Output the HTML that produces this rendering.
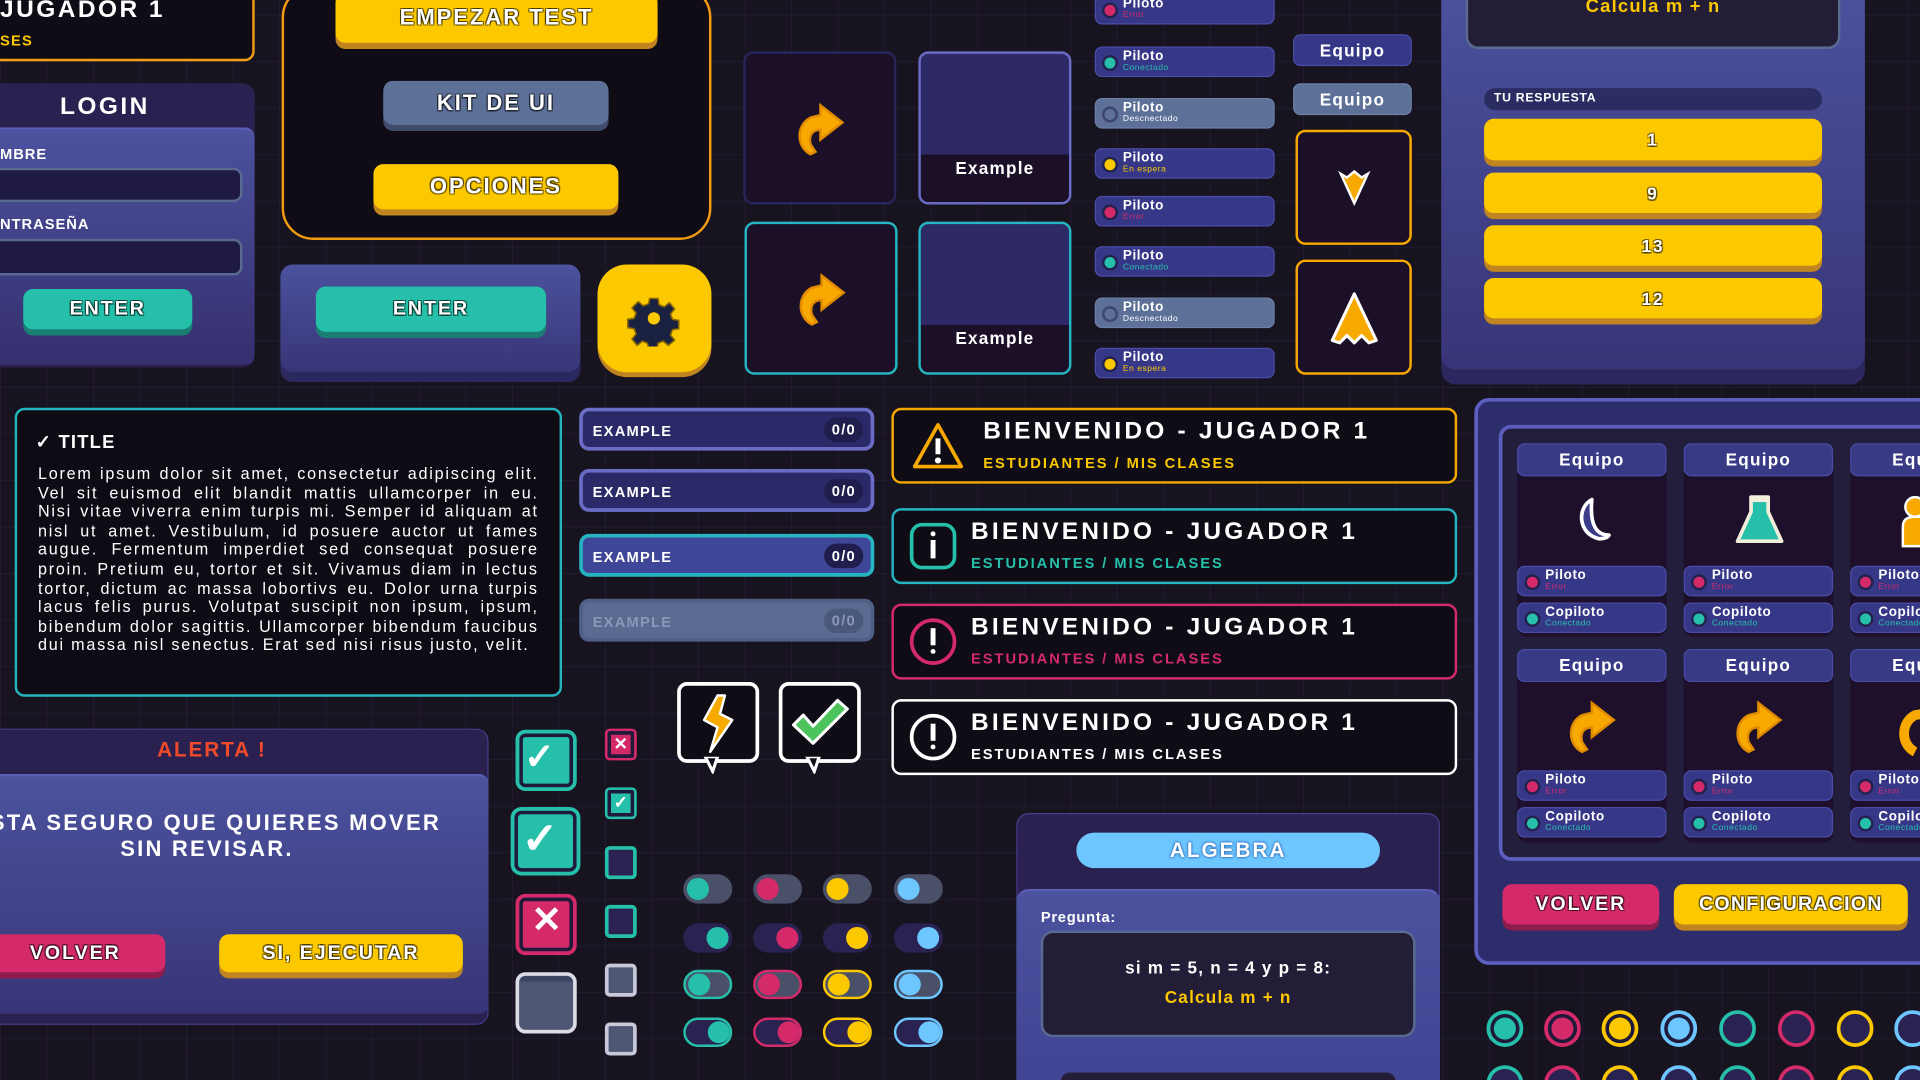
<!DOCTYPE html>
<html><head><meta charset="utf-8"><style>
*{box-sizing:border-box;margin:0;padding:0}
html,body{width:1920px;height:1080px;overflow:hidden;background:#17131f}
#w{position:absolute;left:0;top:0;width:1568px;height:882px;overflow:hidden;transform:scale(1.22449);transform-origin:0 0;font-family:"Liberation Sans",sans-serif;color:#fff;
background-color:#17131f;background-image:linear-gradient(rgba(80,60,140,.18) 1px,transparent 1px),linear-gradient(90deg,rgba(80,60,140,.18) 1px,transparent 1px);background-size:38px 38px;background-position:0 12px}
.a{position:absolute}
.btn{position:absolute;display:flex;align-items:center;justify-content:center;font-weight:bold;border-radius:8px;color:#fff;letter-spacing:1.6px;text-shadow:-1px -1px 0 rgba(0,0,0,.45),1px -1px 0 rgba(0,0,0,.45),-1px 1px 0 rgba(0,0,0,.45),1px 1px 0 rgba(0,0,0,.45)}
.y{background:#fcc800;box-shadow:0 5px 0 #c08420}
.t{background:#26c0aa;box-shadow:0 5px 0 #1a7f72}
.p{background:#d42a6a;box-shadow:0 5px 0 #8d1d4a}
.s{background:#5d7098;box-shadow:0 5px 0 #3f4c6c}
.chip{position:absolute;width:147px;height:25px;border-radius:6px;background:#363887;border:1px solid #4a4ca8}
.chip i{position:absolute;left:5px;top:6px;width:13px;height:13px;border-radius:50%;border:2px solid #23224f}
.chip b{position:absolute;left:22px;top:1px;font-size:11px;line-height:12px;letter-spacing:.5px}
.chip em{position:absolute;left:22px;top:13px;font-size:7px;font-style:normal;letter-spacing:.4px}
.card{position:absolute;width:125px;height:125px;border-radius:8px;background:#1c1029}
.wb{position:absolute;left:728px;width:462px;height:62px;border-radius:8px;background:#0f0c15;border:2px solid}
.wb .h{position:absolute;left:64px;top:6px;font-size:20px;font-weight:bold;letter-spacing:2.6px}
.wb .s2{position:absolute;left:64px;top:36px;font-size:12px;font-weight:bold;letter-spacing:1.6px}
.ex{position:absolute;left:473px;width:241px;height:35px;border-radius:8px;border:3px solid #6a6cc5;background:#2b2a68;font-size:12px;font-weight:bold;padding:9px 0 0 8px;letter-spacing:1px}
.ex span{position:absolute;right:6px;top:5px;background:#1f1e4c;border-radius:10px;padding:3px 6px;font-size:12px}
.tg{position:absolute;width:40px;height:24px;border-radius:12px;background:#4a5068}
.tg i{position:absolute;top:3px;width:18px;height:18px;border-radius:50%}
.cir{position:absolute;width:30px;height:30px;border-radius:50%;border:3px solid}
.tc{position:absolute;width:122px;border-radius:8px;background:#1e0f2a}
.tc .hd{height:27px;background:#383a86;border-radius:6px;border:1px solid #4a4ca8;text-align:center;font-size:14px;line-height:25px;font-weight:bold;letter-spacing:1px}
</style></head><body><div id="w">

<!-- top-left banner -->
<div class="a" style="left:-12px;top:-10px;width:220px;height:60px;border:2px solid #f39c12;border-radius:8px;background:#0f0c15"></div>
<div class="a" style="left:0;top:-3px;font-size:20px;font-weight:bold;letter-spacing:2px">JUGADOR 1</div>
<div class="a" style="left:0;top:26px;font-size:12px;font-weight:bold;color:#fcc800;letter-spacing:1px">SES</div>

<!-- login -->
<div class="a" style="left:-12px;top:68px;width:220px;height:232px;border-radius:10px;background:#2a2150"></div>
<div class="a" style="left:49px;top:76px;font-size:20px;font-weight:bold;letter-spacing:2px">LOGIN</div>
<div class="a" style="left:-12px;top:104px;width:220px;height:194px;border-radius:8px;background:linear-gradient(#4c529e,#352f6e);border-top:2px solid #5a60b8"></div>
<div class="a" style="left:0;top:119px;font-size:12px;font-weight:bold;letter-spacing:.8px">MBRE</div>
<div class="a" style="left:-12px;top:137px;width:210px;height:28px;border-radius:7px;background:#1f1a44;border:2px solid #5a6a90"></div>
<div class="a" style="left:0;top:176px;font-size:12px;font-weight:bold;letter-spacing:.8px">NTRASEÑA</div>
<div class="a" style="left:-12px;top:195px;width:210px;height:30px;border-radius:7px;background:#1f1a44;border:2px solid #5a6a90"></div>
<div class="btn t" style="left:19px;top:236px;width:138px;height:33px;font-size:16px">ENTER</div>

<!-- menu box -->
<div class="a" style="left:230px;top:-12px;width:351px;height:208px;border:2px solid #f39c12;border-radius:26px;background:#0f0c15"></div>
<div class="btn y" style="left:274px;top:-6px;width:263px;height:41px;font-size:18px">EMPEZAR TEST</div>
<div class="btn s" style="left:313px;top:66px;width:184px;height:36px;font-size:18px">KIT DE UI</div>
<div class="btn y" style="left:305px;top:134px;width:200px;height:37px;font-size:18px">OPCIONES</div>

<!-- enter panel -->
<div class="a" style="left:229px;top:216px;width:245px;height:88px;border-radius:10px;background:linear-gradient(#4c529e,#383577);box-shadow:0 8px 0 #2b2860"></div>
<div class="btn t" style="left:258px;top:234px;width:188px;height:37px;font-size:16px">ENTER</div>
<div class="a" style="left:488px;top:216px;width:93px;height:88px;border-radius:24px;background:#fcc800;box-shadow:0 4px 0 #c08420"></div>
<svg class="a" style="left:511px;top:237px" width="46" height="46" viewBox="0 0 46 46"><g fill="#1b2140" stroke="#8a6a00" stroke-width="1.5"><path d="M19 5h8l1 6 5 2 5-4 5 6-4 5 2 5 6 1v8l-6 1-2 5 4 5-6 5-5-4-5 2-1 6h-8l-1-6-5-2-5 4-5-6 4-5-2-5-6-1v-8l6-1 2-5-4-5 6-6 5 4 5-2z" transform="scale(.85) translate(4 3)"/></g><circle cx="23" cy="23" r="5" fill="#fcc800"/></svg>

<!-- arrow cards -->
<div class="card" style="left:607px;top:42px;border:2px solid #2a2558"></div>
<div class="card" style="left:608px;top:181px;border:2px solid #26b5c0"></div>
<svg class="a" style="left:648px;top:82px" width="44" height="48" viewBox="0 0 44 48"><path d="M14 44C2 38 2 20 14 14l8-2V4l18 14-18 14v-8c-6 0-10 4-8 12l4 6z" fill="#f7a900" stroke="#e08a00" stroke-width="2"/></svg>
<svg class="a" style="left:649px;top:221px" width="44" height="48" viewBox="0 0 44 48"><path d="M14 44C2 38 2 20 14 14l8-2V4l18 14-18 14v-8c-6 0-10 4-8 12l4 6z" fill="#f7a900" stroke="#e08a00" stroke-width="2"/></svg>
<div class="card" style="left:750px;top:42px;border:2px solid #6a6cc5;background:linear-gradient(#2e2a68 0 68%,#1c1029 68%)"></div>
<div class="a" style="left:750px;top:129px;width:125px;text-align:center;font-size:14px;font-weight:bold;letter-spacing:1px">Example</div>
<div class="card" style="left:750px;top:181px;border:2px solid #26b5c0;background:linear-gradient(#2e2a68 0 68%,#1c1029 68%)"></div>
<div class="a" style="left:750px;top:268px;width:125px;text-align:center;font-size:14px;font-weight:bold;letter-spacing:1px">Example</div>

<!-- chips -->
<div class="chip" style="left:894px;top:-5px"><i style="background:#d42a6a"></i><b>Piloto</b><em style="color:#d42a6a">Error</em></div>
<div class="chip" style="left:894px;top:38px"><i style="background:#26c0aa"></i><b>Piloto</b><em style="color:#26c0aa">Conectado</em></div>
<div class="chip" style="left:894px;top:80px;background:#5d7098;border-color:#6d80a8"><i style="background:#5d7098;border-color:#3c4668"></i><b>Piloto</b><em>Descnectado</em></div>
<div class="chip" style="left:894px;top:121px"><i style="background:#fcc800"></i><b>Piloto</b><em style="color:#fcc800">En espera</em></div>
<div class="chip" style="left:894px;top:160px"><i style="background:#d42a6a"></i><b>Piloto</b><em style="color:#d42a6a">Error</em></div>
<div class="chip" style="left:894px;top:201px"><i style="background:#26c0aa"></i><b>Piloto</b><em style="color:#26c0aa">Conectado</em></div>
<div class="chip" style="left:894px;top:243px;background:#5d7098;border-color:#6d80a8"><i style="background:#5d7098;border-color:#3c4668"></i><b>Piloto</b><em>Descnectado</em></div>
<div class="chip" style="left:894px;top:284px"><i style="background:#fcc800"></i><b>Piloto</b><em style="color:#fcc800">En espera</em></div>

<div class="a" style="left:1056px;top:28px;width:97px;height:26px;border-radius:6px;background:#363887;border:1px solid #4a4ca8;text-align:center;font-size:14px;line-height:24px;font-weight:bold;letter-spacing:1px">Equipo</div>
<div class="a" style="left:1056px;top:68px;width:97px;height:26px;border-radius:6px;background:#5d7098;border:1px solid #6d80a8;text-align:center;font-size:14px;line-height:24px;font-weight:bold;letter-spacing:1px">Equipo</div>
<div class="a" style="left:1058px;top:106px;width:95px;height:94px;border:2px solid #f7a900;border-radius:8px;background:#1c1029"></div>
<svg class="a" style="left:1092px;top:138px" width="28" height="30" viewBox="0 0 28 30"><path d="M3 4l5 3 6-5 6 5 5-3-11 24z" fill="#f7a900" stroke="#fff" stroke-width="2"/></svg>
<div class="a" style="left:1058px;top:212px;width:95px;height:94px;border:2px solid #f7a900;border-radius:8px;background:#1c1029"></div>
<svg class="a" style="left:1084px;top:236px" width="44" height="50" viewBox="0 0 44 50"><path d="M22 4L40 42l-6 2-6-6-6 6-6-6-6 6-6-2z" fill="#f7a900" stroke="#fff" stroke-width="2.5" stroke-linejoin="round"/></svg>

<!-- quiz panel -->
<div class="a" style="left:1177px;top:-12px;width:346px;height:314px;border-radius:12px;background:linear-gradient(#4c529e,#383577);box-shadow:0 12px 0 #2b2860"></div>
<div class="a" style="left:1197px;top:-12px;width:306px;height:52px;border-radius:10px;background:#231d37;border:2px solid #5a6a90"></div>
<div class="a" style="left:1197px;top:-3px;width:306px;text-align:center;font-size:15px;font-weight:bold;color:#fcc800;letter-spacing:1px">Calcula m + n</div>
<div class="a" style="left:1212px;top:72px;width:276px;height:18px;border-radius:9px;background:#2b2d62;font-size:10px;font-weight:bold;padding:3px 0 0 8px;letter-spacing:.6px">TU RESPUESTA</div>
<div class="btn y" style="left:1212px;top:97px;width:276px;height:34px;font-size:14px">1</div>
<div class="btn y" style="left:1212px;top:141px;width:276px;height:33px;font-size:14px">9</div>
<div class="btn y" style="left:1212px;top:184px;width:276px;height:33px;font-size:14px">13</div>
<div class="btn y" style="left:1212px;top:227px;width:276px;height:33px;font-size:14px">12</div>

<!-- title box -->
<div class="a" style="left:12px;top:333px;width:447px;height:236px;border:2px solid #26b5c0;border-radius:8px;background:#0e0b14"></div>
<div class="a" style="left:29px;top:352px;font-size:15px;font-weight:bold;letter-spacing:1px">✓ TITLE</div>
<div class="a" style="left:31px;top:379px;width:409px;font-size:13.2px;line-height:15.6px;text-align:justify;letter-spacing:1.45px">Lorem ipsum dolor sit amet, consectetur adipiscing elit. Vel sit euismod elit blandit mattis ullamcorper in eu. Nisi vitae viverra enim turpis mi. Semper id aliquam at nisl ut amet. Vestibulum, id posuere auctor ut fames augue. Fermentum imperdiet sed consequat posuere proin. Pretium eu, tortor et sit. Vivamus diam in lectus tortor, dictum ac massa lobortivs eu. Dolor urna turpis lacus felis purus. Volutpat suscipit non ipsum, ipsum, bibendum dolor sagittis. Ullamcorper bibendum faucibus dui massa nisl senectus. Erat sed nisi risus justo, velit.</div>

<!-- example bars -->
<div class="ex" style="top:333px">EXAMPLE<span>0/0</span></div>
<div class="ex" style="top:383px">EXAMPLE<span>0/0</span></div>
<div class="ex" style="top:436px;border-color:#26b5c0;background:#3d4697">EXAMPLE<span>0/0</span></div>
<div class="ex" style="top:489px;border-color:#4f5f86;background:#5a6a90;color:#8a98b8">EXAMPLE<span style="background:#4a587c;color:#8a98b8">0/0</span></div>

<!-- welcome boxes -->
<div class="wb" style="top:333px;border-color:#f7a900"><svg class="a" style="left:14px;top:8px" width="44" height="42" viewBox="0 0 44 42"><path d="M22 4L41 38H3z" fill="none" stroke="#f7a900" stroke-width="3" stroke-linejoin="round"/><rect x="20" y="15" width="4" height="13" fill="#fff"/><circle cx="22" cy="33" r="2.5" fill="#fff"/></svg><div class="h" style="left:73px">BIENVENIDO - JUGADOR 1</div><div class="s2" style="left:73px;color:#fcc800">ESTUDIANTES / MIS CLASES</div></div>
<div class="wb" style="top:415px;border-color:#26b5c0"><div class="a" style="left:13px;top:10px;width:38px;height:38px;border:3px solid #26c0aa;border-radius:10px"></div><div class="a" style="left:30px;top:17px;width:4px;height:4px;background:#fff;border-radius:2px"></div><div class="a" style="left:30px;top:24px;width:4px;height:15px;background:#fff"></div><div class="h" style="left:63px">BIENVENIDO - JUGADOR 1</div><div class="s2" style="left:63px;color:#26c0aa">ESTUDIANTES / MIS CLASES</div></div>
<div class="wb" style="top:493px;border-color:#d42a6a"><div class="a" style="left:13px;top:10px;width:38px;height:38px;border:3px solid #d42a6a;border-radius:50%"></div><div class="a" style="left:30px;top:18px;width:4px;height:14px;background:#fff"></div><div class="a" style="left:30px;top:35px;width:4px;height:4px;background:#fff;border-radius:2px"></div><div class="h" style="left:63px">BIENVENIDO - JUGADOR 1</div><div class="s2" style="left:63px;color:#d42a6a">ESTUDIANTES / MIS CLASES</div></div>
<div class="wb" style="top:571px;border-color:#fff"><div class="a" style="left:13px;top:10px;width:38px;height:38px;border:3px solid #fff;border-radius:50%"></div><div class="a" style="left:30px;top:18px;width:4px;height:14px;background:#fff"></div><div class="a" style="left:30px;top:35px;width:4px;height:4px;background:#fff;border-radius:2px"></div><div class="h" style="left:63px">BIENVENIDO - JUGADOR 1</div><div class="s2" style="left:63px">ESTUDIANTES / MIS CLASES</div></div>

<!-- alert -->
<div class="a" style="left:-12px;top:595px;width:411px;height:242px;border-radius:10px;background:#2a2150;border:1px solid #4a3a8a"></div>
<div class="a" style="left:-12px;top:603px;width:370px;text-align:center;font-size:17px;font-weight:bold;color:#f04a2a;letter-spacing:1.5px">ALERTA !</div>
<div class="a" style="left:-12px;top:632px;width:411px;height:196px;border-radius:8px;background:linear-gradient(#4c529e,#383577);border-top:2px solid #5a60b8"></div>
<div class="a" style="left:-96px;top:662px;width:530px;text-align:center;font-size:18px;font-weight:bold;line-height:21px;letter-spacing:1.8px">ESTA SEGURO QUE QUIERES MOVER<br>SIN REVISAR.</div>
<div class="btn p" style="left:-12px;top:763px;width:147px;height:31px;font-size:16px">VOLVER</div>
<div class="btn y" style="left:179px;top:763px;width:199px;height:31px;font-size:16px">SI, EJECUTAR</div>

<!-- checkboxes -->
<div class="a" style="left:421px;top:596px;width:50px;height:50px;border-radius:8px;background:#26c0aa;border:3px solid #26c0aa;box-shadow:inset 0 0 0 3px #1f1a3a"></div>
<div class="a" style="left:428px;top:601px;font-size:30px;font-weight:bold">✓</div>
<div class="a" style="left:417px;top:659px;width:57px;height:56px;border-radius:9px;background:#26c0aa;border:3px solid #26c0aa;box-shadow:inset 0 0 0 3px #1f1a3a"></div>
<div class="a" style="left:426px;top:664px;font-size:36px;font-weight:bold">✓</div>
<div class="a" style="left:421px;top:730px;width:50px;height:50px;border-radius:8px;background:#d42a6a;border:3px solid #d42a6a;box-shadow:inset 0 0 0 3px #1f1a3a"></div>
<div class="a" style="left:434px;top:734px;font-size:30px;font-weight:bold">✕</div>
<div class="a" style="left:421px;top:794px;width:50px;height:50px;border-radius:8px;background:linear-gradient(#3c4660 0 10%,#4d5672 10%);border:3px solid #dcdce8"></div>
<div class="a" style="left:494px;top:595px;width:26px;height:26px;border-radius:4px;background:#d42a6a;box-shadow:inset 0 0 0 3px #1f1a3a;border:2px solid #d42a6a;font-size:14px;font-weight:bold;text-align:center;line-height:21px">✕</div>
<div class="a" style="left:494px;top:643px;width:26px;height:26px;border-radius:4px;background:#26c0aa;box-shadow:inset 0 0 0 3px #1f1a3a;border:2px solid #26c0aa;font-size:14px;font-weight:bold;text-align:center;line-height:21px">✓</div>
<div class="a" style="left:494px;top:691px;width:26px;height:27px;border-radius:4px;background:#2a2250;border:3px solid #26c0aa"></div>
<div class="a" style="left:494px;top:739px;width:26px;height:27px;border-radius:4px;background:#2a2250;border:3px solid #26c0aa"></div>
<div class="a" style="left:494px;top:787px;width:26px;height:27px;border-radius:4px;background:#4d5672;border:3px solid #c8c8d8"></div>
<div class="a" style="left:494px;top:835px;width:26px;height:27px;border-radius:4px;background:#4d5672;border:3px solid #c8c8d8"></div>

<!-- speech bubbles -->
<div class="a" style="left:553px;top:557px;width:67px;height:66px;border:3px solid #fff;border-radius:8px;background:#0f0c15"></div>
<svg class="a" style="left:574px;top:618px" width="20" height="14" viewBox="0 0 20 14"><path d="M2 0l6 12 4-12z" fill="#0f0c15" stroke="#fff" stroke-width="2.5"/></svg>
<svg class="a" style="left:566px;top:566px" width="40" height="50" viewBox="0 0 40 50"><path d="M20 2L9 22l11 6-6 20 18-26-10-5 4-15z" fill="#f7a900" stroke="#fff" stroke-width="2" stroke-linejoin="round"/></svg>
<div class="a" style="left:636px;top:557px;width:67px;height:66px;border:3px solid #fff;border-radius:8px;background:#0f0c15"></div>
<svg class="a" style="left:657px;top:618px" width="20" height="14" viewBox="0 0 20 14"><path d="M2 0l6 12 4-12z" fill="#0f0c15" stroke="#fff" stroke-width="2.5"/></svg>
<svg class="a" style="left:644px;top:568px" width="52" height="44" viewBox="0 0 52 44"><path d="M4 24l8-8 8 9L40 4l8 7-28 28z" fill="#4dc35c" stroke="#fff" stroke-width="2.5" stroke-linejoin="round"/></svg>

<!-- toggles -->
<div class="tg" style="left:558px;top:714px"><i style="left:3px;background:#26c0aa"></i></div>
<div class="tg" style="left:615px;top:714px"><i style="left:3px;background:#d42a6a"></i></div>
<div class="tg" style="left:672px;top:714px"><i style="left:3px;background:#fcc800"></i></div>
<div class="tg" style="left:730px;top:714px"><i style="left:3px;background:#6ec6ff"></i></div>
<div class="tg" style="left:558px;top:754px;background:#2a2250"><i style="left:19px;background:#26c0aa"></i></div>
<div class="tg" style="left:615px;top:754px;background:#2a2250"><i style="left:19px;background:#d42a6a"></i></div>
<div class="tg" style="left:672px;top:754px;background:#2a2250"><i style="left:19px;background:#fcc800"></i></div>
<div class="tg" style="left:730px;top:754px;background:#2a2250"><i style="left:19px;background:#6ec6ff"></i></div>
<div class="tg" style="left:558px;top:792px;border:2px solid #26c0aa"><i style="left:2px;top:1px;background:#26c0aa"></i></div>
<div class="tg" style="left:615px;top:792px;border:2px solid #d42a6a"><i style="left:2px;top:1px;background:#d42a6a"></i></div>
<div class="tg" style="left:672px;top:792px;border:2px solid #fcc800"><i style="left:2px;top:1px;background:#fcc800"></i></div>
<div class="tg" style="left:730px;top:792px;border:2px solid #6ec6ff"><i style="left:2px;top:1px;background:#6ec6ff"></i></div>
<div class="tg" style="left:558px;top:831px;background:#2a2250;border:2px solid #26c0aa"><i style="left:18px;top:1px;background:#26c0aa"></i></div>
<div class="tg" style="left:615px;top:831px;background:#2a2250;border:2px solid #d42a6a"><i style="left:18px;top:1px;background:#d42a6a"></i></div>
<div class="tg" style="left:672px;top:831px;background:#2a2250;border:2px solid #fcc800"><i style="left:18px;top:1px;background:#fcc800"></i></div>
<div class="tg" style="left:730px;top:831px;background:#2a2250;border:2px solid #6ec6ff"><i style="left:18px;top:1px;background:#6ec6ff"></i></div>

<!-- algebra -->
<div class="a" style="left:830px;top:664px;width:346px;height:260px;border-radius:10px;background:#2a2150;border:1px solid #4a3a8a"></div>
<div class="btn" style="left:879px;top:680px;width:248px;height:29px;border-radius:15px;background:#6ec6ff;font-size:17px;text-shadow:0 0 2px #2a6ab8,0 0 2px #2a6ab8">ALGEBRA</div>
<div class="a" style="left:830px;top:726px;width:346px;height:200px;border-radius:10px;background:linear-gradient(#4c529e,#3f4190);border-top:2px solid #5a60b8"></div>
<div class="a" style="left:850px;top:742px;font-size:12px;font-weight:bold;letter-spacing:.6px">Pregunta:</div>
<div class="a" style="left:850px;top:760px;width:306px;height:87px;border-radius:10px;background:#231d37;border:2px solid #5a6a90"></div>
<div class="a" style="left:850px;top:782px;width:306px;text-align:center;font-size:14px;font-weight:bold;letter-spacing:1px">si m = 5, n = 4 y p = 8:</div>
<div class="a" style="left:850px;top:806px;width:306px;text-align:center;font-size:14px;font-weight:bold;color:#fcc800;letter-spacing:1px">Calcula m + n</div>
<div class="a" style="left:866px;top:876px;width:274px;height:20px;border-radius:8px;background:#231d37"></div>

<!-- team panel -->
<div class="a" style="left:1204px;top:325px;width:380px;height:463px;border-radius:12px;background:#2d2d6c;border:3px solid #5c5fbf"></div>
<div class="a" style="left:1224px;top:347px;width:360px;height:356px;border-radius:10px;background:#221e3c;border:3px solid #5c5fbf"></div>

<div class="tc" style="left:1239px;top:362px;height:158px"><div class="hd">Equipo</div></div>
<div class="tc" style="left:1375px;top:362px;height:158px"><div class="hd">Equipo</div></div>
<div class="tc" style="left:1511px;top:362px;height:158px"><div class="hd">Equipo</div></div>
<div class="tc" style="left:1239px;top:530px;height:158px"><div class="hd">Equipo</div></div>
<div class="tc" style="left:1375px;top:530px;height:158px"><div class="hd">Equipo</div></div>
<div class="tc" style="left:1511px;top:530px;height:158px"><div class="hd">Equipo</div></div>

<svg class="a" style="left:1282px;top:404px" width="36" height="40" viewBox="0 0 36 40"><path d="M18 4C6 10 6 32 24 36c4 0 7-1 8-3-10 0-16-8-14-29z" fill="#3a3c8a" stroke="#fff" stroke-width="3" stroke-linejoin="round"/></svg>
<svg class="a" style="left:1415px;top:402px" width="44" height="46" viewBox="0 0 44 46"><path d="M15 4h14v12l11 24H4l11-24z" fill="#26c0aa" stroke="#f2eedc" stroke-width="3" stroke-linejoin="round"/><rect x="14" y="3" width="16" height="5" fill="#f2eedc"/></svg>
<svg class="a" style="left:1550px;top:404px" width="20" height="44" viewBox="0 0 20 44"><circle cx="14" cy="10" r="8" fill="#f7a900" stroke="#fff" stroke-width="2"/><path d="M4 42V26c0-6 4-8 10-8h6v24z" fill="#f7a900" stroke="#fff" stroke-width="2"/></svg>
<svg class="a" style="left:1278px;top:570px" width="44" height="48" viewBox="0 0 44 48"><path d="M14 44C2 38 2 20 14 14l8-2V4l18 14-18 14v-8c-6 0-10 4-8 12l4 6z" fill="#f7a900" stroke="#e08a00" stroke-width="2"/></svg>
<svg class="a" style="left:1414px;top:570px" width="44" height="48" viewBox="0 0 44 48"><path d="M14 44C2 38 2 20 14 14l8-2V4l18 14-18 14v-8c-6 0-10 4-8 12l4 6z" fill="#f7a900" stroke="#e08a00" stroke-width="2"/></svg>
<svg class="a" style="left:1550px;top:570px" width="20" height="48" viewBox="0 0 20 48"><path d="M14 44C2 38 2 20 14 14l6-1" fill="none" stroke="#f7a900" stroke-width="8"/></svg>

<div class="chip" style="left:1239px;top:462px;width:122px"><i style="background:#d42a6a"></i><b>Piloto</b><em style="color:#d42a6a">Error</em></div>
<div class="chip" style="left:1375px;top:462px;width:122px"><i style="background:#d42a6a"></i><b>Piloto</b><em style="color:#d42a6a">Error</em></div>
<div class="chip" style="left:1511px;top:462px;width:122px"><i style="background:#d42a6a"></i><b>Piloto</b><em style="color:#d42a6a">Error</em></div>
<div class="chip" style="left:1239px;top:492px;width:122px"><i style="background:#26c0aa"></i><b>Copiloto</b><em style="color:#26c0aa">Conectado</em></div>
<div class="chip" style="left:1375px;top:492px;width:122px"><i style="background:#26c0aa"></i><b>Copiloto</b><em style="color:#26c0aa">Conectado</em></div>
<div class="chip" style="left:1511px;top:492px;width:122px"><i style="background:#26c0aa"></i><b>Copiloto</b><em style="color:#26c0aa">Conectado</em></div>
<div class="chip" style="left:1239px;top:629px;width:122px"><i style="background:#d42a6a"></i><b>Piloto</b><em style="color:#d42a6a">Error</em></div>
<div class="chip" style="left:1375px;top:629px;width:122px"><i style="background:#d42a6a"></i><b>Piloto</b><em style="color:#d42a6a">Error</em></div>
<div class="chip" style="left:1511px;top:629px;width:122px"><i style="background:#d42a6a"></i><b>Piloto</b><em style="color:#d42a6a">Error</em></div>
<div class="chip" style="left:1239px;top:659px;width:122px"><i style="background:#26c0aa"></i><b>Copiloto</b><em style="color:#26c0aa">Conectado</em></div>
<div class="chip" style="left:1375px;top:659px;width:122px"><i style="background:#26c0aa"></i><b>Copiloto</b><em style="color:#26c0aa">Conectado</em></div>
<div class="chip" style="left:1511px;top:659px;width:122px"><i style="background:#26c0aa"></i><b>Copiloto</b><em style="color:#26c0aa">Conectado</em></div>

<div class="btn p" style="left:1227px;top:722px;width:128px;height:33px;font-size:16px">VOLVER</div>
<div class="btn y" style="left:1367px;top:722px;width:191px;height:33px;font-size:16px;letter-spacing:1px">CONFIGURACION</div>

<!-- circles -->
<div class="cir" style="left:1214px;top:825px;border-color:#26c0aa;background:#26c0aa;box-shadow:inset 0 0 0 3px #1f1a3a"></div>
<div class="cir" style="left:1261px;top:825px;border-color:#d42a6a;background:#d42a6a;box-shadow:inset 0 0 0 3px #1f1a3a"></div>
<div class="cir" style="left:1308px;top:825px;border-color:#fcc800;background:#fcc800;box-shadow:inset 0 0 0 3px #1f1a3a"></div>
<div class="cir" style="left:1356px;top:825px;border-color:#6ec6ff;background:#6ec6ff;box-shadow:inset 0 0 0 3px #1f1a3a"></div>
<div class="cir" style="left:1404px;top:825px;border-color:#26c0aa;background:#2a2250"></div>
<div class="cir" style="left:1452px;top:825px;border-color:#d42a6a;background:#2a2250"></div>
<div class="cir" style="left:1500px;top:825px;border-color:#fcc800;background:#2a2250"></div>
<div class="cir" style="left:1547px;top:825px;border-color:#6ec6ff;background:#2a2250"></div>
<div class="cir" style="left:1214px;top:870px;border-color:#26c0aa;background:#2a2250"></div>
<div class="cir" style="left:1261px;top:870px;border-color:#d42a6a;background:#2a2250"></div>
<div class="cir" style="left:1308px;top:870px;border-color:#fcc800;background:#2a2250"></div>
<div class="cir" style="left:1356px;top:870px;border-color:#6ec6ff;background:#2a2250"></div>
<div class="cir" style="left:1404px;top:870px;border-color:#26c0aa;background:#2a2250"></div>
<div class="cir" style="left:1452px;top:870px;border-color:#d42a6a;background:#2a2250"></div>
<div class="cir" style="left:1500px;top:870px;border-color:#fcc800;background:#2a2250"></div>
<div class="cir" style="left:1547px;top:870px;border-color:#6ec6ff;background:#2a2250"></div>

</div></body></html>
